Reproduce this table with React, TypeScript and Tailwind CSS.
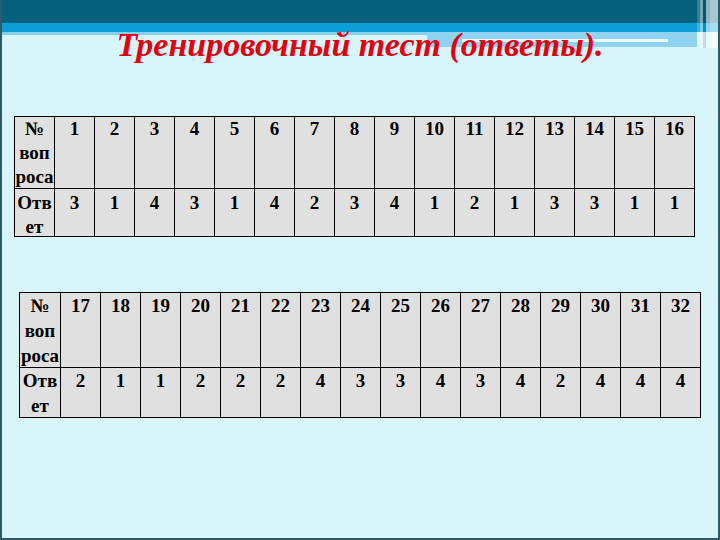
import React from "react";

const q1 = ["1","2","3","4","5","6","7","8","9","10","11","12","13","14","15","16"];
const a1 = ["3","1","4","3","1","4","2","3","4","1","2","1","3","3","1","1"];
const q2 = ["17","18","19","20","21","22","23","24","25","26","27","28","29","30","31","32"];
const a2 = ["2","1","1","2","2","2","4","3","3","4","3","4","2","4","4","4"];

function Table1() {
  return (
    <div className="ml-[12px] mt-[51px] w-fit grid grid-cols-[repeat(17,40px)] border-l border-t border-black text-black">
      <div className="h-[72px] border-r border-b border-black bg-[#e0e0e0] text-center text-[19px] font-bold leading-[24px] whitespace-nowrap">
        №<br />воп<br />роса
      </div>
      {q1.map((q) => (
        <div key={"q" + q} className="h-[72px] border-r border-b border-black bg-[#e0e0e0] text-center text-[19px] font-bold leading-[24px]">
          {q}
        </div>
      ))}
      <div className="h-[48px] pt-[2px] border-r border-b border-black bg-[#e0e0e0] text-center text-[19px] font-bold leading-[24px] whitespace-nowrap">
        Отв<br />ет
      </div>
      {a1.map((a, i) => (
        <div key={"a" + i} className="h-[48px] pt-[2px] border-r border-b border-black bg-[#e0e0e0] text-center text-[19px] font-bold leading-[24px]">
          {a}
        </div>
      ))}
    </div>
  );
}

function Table2() {
  return (
    <div className="ml-[17px] mt-[55px] w-fit grid grid-cols-[41px_repeat(16,40px)] border-l border-t border-black text-black">
      <div className="h-[75px] border-r border-b border-black bg-[#e0e0e0] text-center text-[19px] font-bold leading-[25px] whitespace-nowrap">
        №<br />воп<br />роса
      </div>
      {q2.map((q) => (
        <div key={"q" + q} className="h-[75px] border-r border-b border-black bg-[#e0e0e0] text-center text-[19px] font-bold leading-[25px]">
          {q}
        </div>
      ))}
      <div className="h-[50px] border-r border-b border-black bg-[#e0e0e0] text-center text-[19px] font-bold leading-[25px] whitespace-nowrap">
        Отв<br />ет
      </div>
      {a2.map((a, i) => (
        <div key={"a" + i} className="h-[50px] border-r border-b border-black bg-[#e0e0e0] text-center text-[19px] font-bold leading-[25px]">
          {a}
        </div>
      ))}
    </div>
  );
}

export default function App() {
  return (
    <div className="relative w-[720px] h-[540px] overflow-hidden flex flex-col bg-[#d8f6f9] border-l-2 border-r-2 border-b-2 border-[#2c5a68] font-['Liberation_Serif',serif]">
      <div className="shrink-0 flex flex-col h-[47px]">
        <div className="h-[23px] bg-[#05607b]" />
        <div className="h-[9px] bg-[#0b9fd6]" />
        <div className="h-[15px] flex">
          <div className="w-[425px] h-[3px] bg-[#86cdee]" />
          <div className="w-[270px] h-[15px] bg-[#8fd3f0] flex flex-col">
            <div className="h-[7px]" />
            <div className="ml-[35px] w-[206px] h-[3px] bg-[#eefaff]" />
          </div>
        </div>
      </div>
      <div className="absolute top-0 right-0 h-[48px] w-[21px] flex">
        <div className="w-[3px] bg-white/20" />
        <div className="w-[3px] bg-white/45" />
        <div className="w-[3px] bg-black/10" />
        <div className="w-[4px] bg-white/55" />
        <div className="w-[8px] bg-white/65" />
      </div>
      <h1 className="relative mt-[-22px] text-center text-[34px] leading-[40px] italic font-bold text-[#e3000f]">
        Тренировочный тест (ответы).
      </h1>
      <Table1 />
      <Table2 />
    </div>
  );
}
